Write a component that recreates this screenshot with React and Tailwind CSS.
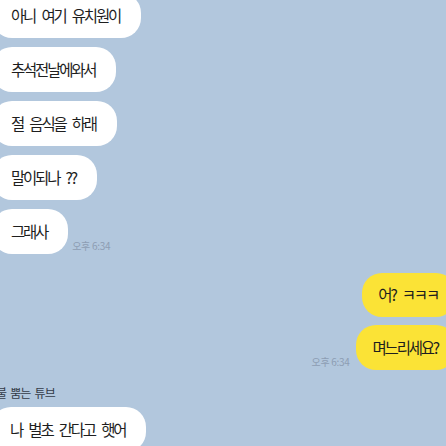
export default function App() {
  const font = { fontFamily: '"Noto Sans CJK KR", "Noto Sans", sans-serif' };
  const left = ["아니 여기 유치원이", "추석전날에와서", "절 음식을 하래", "말이되나 ??"];
  const txt = "text-[15.5px] tracking-[-2.2px] [word-spacing:5px] whitespace-pre";
  return (
    <div
      className="w-[446px] h-[446px] overflow-hidden bg-[#b2c7dd] flex flex-col text-[#1e1e1e]"
      style={font}
    >
      <div className="flex flex-col items-start gap-[9px] mt-[-7px] ml-[-8px]">
        {left.map((t) => (
          <div
            key={t}
            className={`h-[45px] rounded-[20px] bg-white pl-[19px] pr-[21px] flex items-center ${txt}`}
          >
            {t}
          </div>
        ))}
        <div className="flex items-end gap-[4px]">
          <div className={`h-[45px] rounded-[20px] bg-white pl-[19px] pr-[21px] flex items-center ${txt}`}>
            그래사
          </div>
          <span className="text-[10px] leading-[12px] mb-[2px] text-[#8d9db3] tracking-[-0.3px]">오후 6:34</span>
        </div>
      </div>

      <div className="flex flex-col items-end gap-[8px] mt-[19px] mr-[-10px]">
        <div className={`h-[44px] rounded-[20px] bg-[#fbe336] pl-[16px] pr-[18px] flex items-center ${txt}`}>
          어? ㅋㅋㅋ
        </div>
        <div className="flex items-end gap-[6px]">
          <span className="text-[10px] leading-[12px] mb-[2px] text-[#8d9db3] tracking-[-0.3px]">오후 6:34</span>
          <div className={`h-[45px] rounded-[20px] bg-[#fbe336] pl-[17px] pr-[18px] flex items-center ${txt}`}>
            며느리세요?
          </div>
        </div>
      </div>

      <div className="mt-[16px] ml-[-4px] text-[12px] leading-[14px] text-[#343b47] tracking-[-0.8px] [word-spacing:2px] whitespace-pre">
        불 뿜는 튜브
      </div>
      <div className="flex mt-[7px] ml-[-9px]">
        <div className={`h-[45px] shrink-0 rounded-[20px] bg-white pl-[19px] pr-[21px] flex items-center ${txt}`}>
          나 벌초 간다고 햇어
        </div>
      </div>
    </div>
  );
}
